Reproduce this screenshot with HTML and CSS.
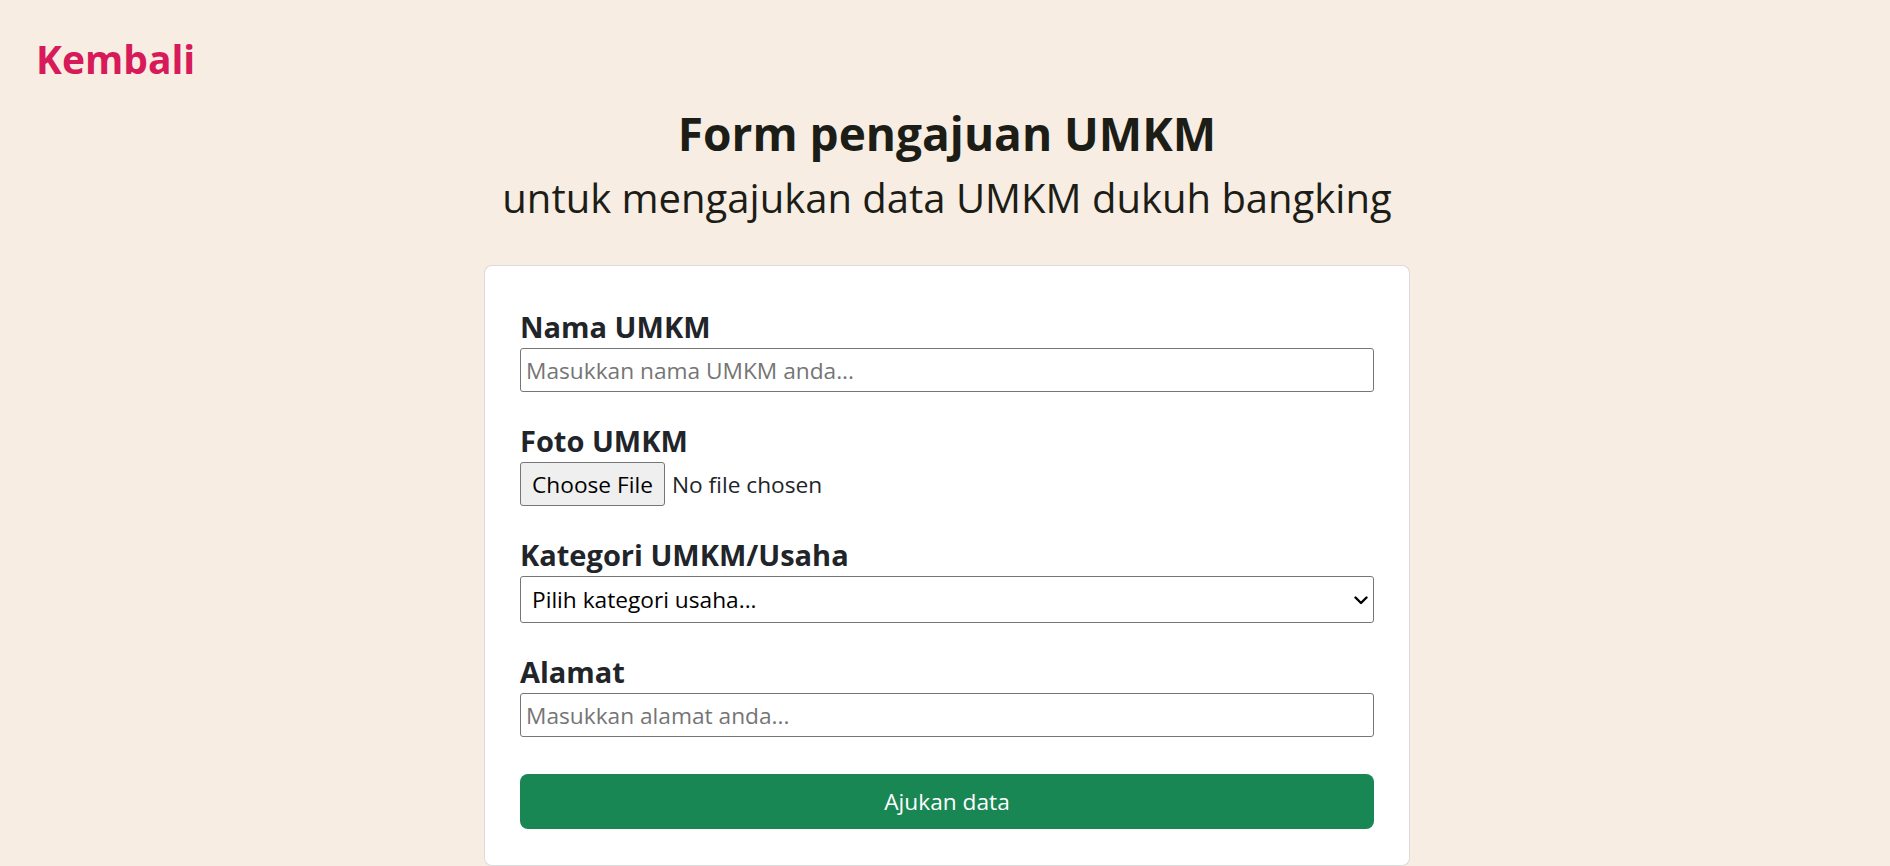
FILE: index.html
```html
<!DOCTYPE html>
<html lang="id">
<head>
<meta charset="utf-8">
<title>Form pengajuan UMKM</title>
<link rel="stylesheet" href="styles.css">
</head>
<body>
<header class="topbar">
  <a class="back-link" href="#">Kembali</a>
</header>
<main class="page">
  <h1 class="title">Form pengajuan UMKM</h1>
  <p class="subtitle">untuk mengajukan data UMKM dukuh bangking</p>
  <form class="card">
    <div class="field">
      <label class="field-label" for="nama">Nama UMKM</label>
      <input class="text-input" id="nama" type="text" placeholder="Masukkan nama UMKM anda...">
    </div>
    <div class="field">
      <label class="field-label">Foto UMKM</label>
      <div class="file-row">
        <span class="file-button">Choose File</span>
        <span class="file-name">No file chosen</span>
      </div>
    </div>
    <div class="field">
      <label class="field-label" for="kategori">Kategori UMKM/Usaha</label>
      <div class="select-wrap">
        <select class="select-input" id="kategori">
          <option>Pilih kategori usaha...</option>
        </select>
        <svg class="select-chevron" width="14" height="9" viewBox="0 0 14 9" aria-hidden="true">
          <polyline points="1.5,1.5 7,7 12.5,1.5" fill="none" stroke="#000" stroke-width="2.4" stroke-linecap="round" stroke-linejoin="round"/>
        </svg>
      </div>
    </div>
    <div class="field field-last">
      <label class="field-label" for="alamat">Alamat</label>
      <input class="text-input" id="alamat" type="text" placeholder="Masukkan alamat anda...">
    </div>
    <button class="submit" type="button">Ajukan data</button>
  </form>
</main>
</body>
</html>
```

FILE: styles.css
```css
* {
  box-sizing: border-box;
}

html, body {
  margin: 0;
  padding: 0;
}

body {
  background: #f8ede3;
  font-family: "Open Sans", "Noto Sans", sans-serif;
  color: #212529;
  min-height: 866px;
}

.topbar {
  padding: 39px 0 0 36px;
  height: 78px;
}

.back-link {
  display: inline-block;
  font-size: 39px;
  line-height: 39px;
  font-weight: 700;
  color: #d71a59;
  text-decoration: none;
}

.page {
  display: flex;
  flex-direction: column;
  align-items: center;
  padding-left: 4px;
}

.title {
  margin: 34px 0 0;
  font-size: 46px;
  line-height: 43px;
  font-weight: 700;
  color: #1c1d17;
}

.subtitle {
  margin: 23px 0 0;
  font-size: 40px;
  line-height: 40px;
  font-weight: 400;
  color: #1c1d17;
}

.card {
  margin-top: 47px;
  width: 926px;
  background: #ffffff;
  border: 1px solid rgba(0, 0, 0, 0.14);
  border-radius: 8px;
  padding: 47px 35px 36px;
  display: flex;
  flex-direction: column;
}

.field {
  display: flex;
  flex-direction: column;
  margin-bottom: 35px;
}

.field-last {
  margin-bottom: 37px;
}

.field-label {
  font-size: 29px;
  line-height: 27px;
  font-weight: 700;
  color: #212529;
  margin-bottom: 8px;
}

.text-input {
  height: 44px;
  width: 100%;
  border: 1px solid #767676;
  border-radius: 3px;
  padding: 0 5px;
  font-family: inherit;
  font-size: 22.7px;
  color: #212529;
  background: #fff;
  outline: none;
}

.text-input::placeholder {
  color: #757575;
}

.file-row {
  display: flex;
  align-items: center;
  height: 44px;
}

.file-button {
  display: flex;
  align-items: center;
  justify-content: center;
  height: 44px;
  width: 145px;
  background: #efefef;
  border: 1px solid #767676;
  border-radius: 3px;
  font-size: 22.7px;
  color: #000;
}

.file-name {
  margin-left: 7px;
  font-size: 22.7px;
  color: #212529;
}

.select-wrap {
  position: relative;
  height: 47px;
}

.select-input {
  appearance: none;
  -webkit-appearance: none;
  width: 100%;
  height: 47px;
  border: 1px solid #767676;
  border-radius: 3px;
  padding: 0 40px 0 11px;
  font-family: inherit;
  font-size: 22.7px;
  color: #000;
  background: #fff;
  outline: none;
}

.select-chevron {
  position: absolute;
  right: 6px;
  top: 20px;
  pointer-events: none;
}

.submit {
  height: 55px;
  width: 100%;
  border: none;
  border-radius: 8px;
  background: #198754;
  color: #fff;
  font-family: inherit;
  font-size: 22.7px;
  cursor: pointer;
}
```
